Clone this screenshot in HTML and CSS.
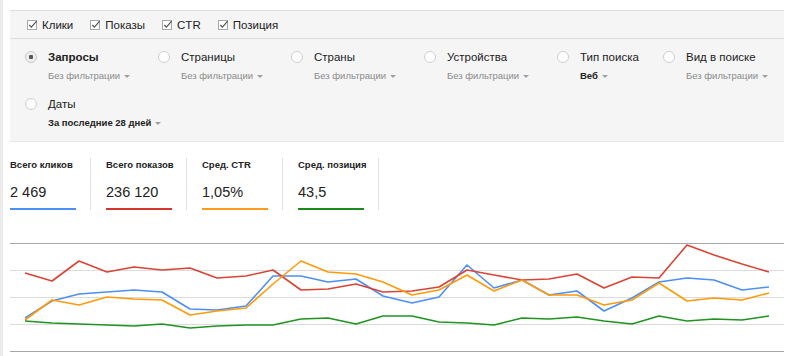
FILE: index.html
```html
<!DOCTYPE html>
<html lang="ru">
<head>
  <meta charset="UTF-8" />
  <meta name="viewport" content="width=device-width, initial-scale=1.0" />
  <title>Анализ поисковых запросов</title>
  <link rel="stylesheet" href="styles.css">
</head>
<body>
  <div class="panel">
    <div class="metrics-toggle">
      <label class="check"><svg class="check-box" width="11" height="11" viewBox="0 0 11 11"><rect x="0.5" y="1.5" width="9" height="9" fill="#fff" stroke="#a8a8a8"/><polyline points="2.3,6 4.4,8.2 9.6,2.2" fill="none" stroke="#555" stroke-width="1.2"/></svg>Клики</label>
      <label class="check"><svg class="check-box" width="11" height="11" viewBox="0 0 11 11"><rect x="0.5" y="1.5" width="9" height="9" fill="#fff" stroke="#a8a8a8"/><polyline points="2.3,6 4.4,8.2 9.6,2.2" fill="none" stroke="#555" stroke-width="1.2"/></svg>Показы</label>
      <label class="check"><svg class="check-box" width="11" height="11" viewBox="0 0 11 11"><rect x="0.5" y="1.5" width="9" height="9" fill="#fff" stroke="#a8a8a8"/><polyline points="2.3,6 4.4,8.2 9.6,2.2" fill="none" stroke="#555" stroke-width="1.2"/></svg>CTR</label>
      <label class="check"><svg class="check-box" width="11" height="11" viewBox="0 0 11 11"><rect x="0.5" y="1.5" width="9" height="9" fill="#fff" stroke="#a8a8a8"/><polyline points="2.3,6 4.4,8.2 9.6,2.2" fill="none" stroke="#555" stroke-width="1.2"/></svg>Позиция</label>
    </div>

    <div class="filters">
      <div class="filter">
        <span class="radio radio-on"></span>
        <div class="filter-body">
          <div class="filter-name filter-name-on">Запросы</div>
          <div class="filter-value">Без фильтрации<span class="caret"></span></div>
        </div>
      </div>
      <div class="filter">
        <span class="radio"></span>
        <div class="filter-body">
          <div class="filter-name">Страницы</div>
          <div class="filter-value">Без фильтрации<span class="caret"></span></div>
        </div>
      </div>
      <div class="filter">
        <span class="radio"></span>
        <div class="filter-body">
          <div class="filter-name">Страны</div>
          <div class="filter-value">Без фильтрации<span class="caret"></span></div>
        </div>
      </div>
      <div class="filter">
        <span class="radio"></span>
        <div class="filter-body">
          <div class="filter-name">Устройства</div>
          <div class="filter-value">Без фильтрации<span class="caret"></span></div>
        </div>
      </div>
      <div class="filter filter-narrow">
        <span class="radio"></span>
        <div class="filter-body">
          <div class="filter-name">Тип поиска</div>
          <div class="filter-value filter-value-set">Веб<span class="caret"></span></div>
        </div>
      </div>
      <div class="filter filter-auto">
        <span class="radio"></span>
        <div class="filter-body">
          <div class="filter-name">Вид в поиске</div>
          <div class="filter-value">Без фильтрации<span class="caret"></span></div>
        </div>
      </div>
      <div class="filter">
        <span class="radio"></span>
        <div class="filter-body">
          <div class="filter-name">Даты</div>
          <div class="filter-value filter-value-set">За последние 28 дней<span class="caret"></span></div>
        </div>
      </div>
    </div>
  </div>

  <div class="totals">
    <div class="total">
      <div class="total-label">Всего кликов</div>
      <div class="total-value">2 469</div>
      <div class="total-line line-clicks"></div>
    </div>
    <div class="total">
      <div class="total-label">Всего показов</div>
      <div class="total-value">236 120</div>
      <div class="total-line line-views"></div>
    </div>
    <div class="total">
      <div class="total-label">Сред. CTR</div>
      <div class="total-value">1,05%</div>
      <div class="total-line line-ctr"></div>
    </div>
    <div class="total">
      <div class="total-label">Сред. позиция</div>
      <div class="total-value">43,5</div>
      <div class="total-line line-pos"></div>
    </div>
  </div>

  <svg class="chart" width="774" height="116" viewBox="10 240 774 116">
    <line class="grid grid-edge" x1="10" y1="244.5" x2="784" y2="244.5"/>
    <line class="grid" x1="10" y1="271.5" x2="784" y2="271.5"/>
    <line class="grid" x1="10" y1="298.5" x2="784" y2="298.5"/>
    <line class="grid" x1="10" y1="325.5" x2="784" y2="325.5"/>
    <line class="grid grid-edge" x1="10" y1="352.5" x2="784" y2="352.5"/>
    <polyline class="series s-clicks" points="25,319 52,302 79,295 107,293 134,291 162,293 190,310 217,311 246,307 273,277 301,277 328,283 356,280 383,297 412,304 439,298 467,266 494,289 522,281 549,296 577,292 604,312 632,299 659,283 687,279 714,281 742,291 769,288"/>
    <polyline class="series s-views" points="25,274 52,282 79,262 107,273 134,268 162,271 190,269 217,279 246,277 273,271 301,291 328,290 356,285 383,293 412,292 439,288 467,271 494,276 522,281 549,280 577,275 604,289 632,278 659,279 687,246 714,256 742,265 769,273"/>
    <polyline class="series s-ctr" points="25,321 52,301 79,306 107,298 134,300 162,301 190,316 217,312 246,309 273,285 301,262 328,273 356,275 383,283 412,296 439,291 467,276 494,292 522,281 549,296 577,296 604,306 632,301 659,284 687,302 714,299 742,301 769,294"/>
    <polyline class="series s-pos" points="25,322 52,324 79,325 107,326 134,327 162,325 190,329 217,327 246,326 273,326 301,320 328,319 356,325 383,317 412,317 439,323 467,324 494,326 522,319 549,320 577,318 604,322 632,325 659,317 687,322 714,320 742,321 769,317"/>
  </svg>
</body>
</html>
```

FILE: styles.css
```css
* { box-sizing: border-box; }
html { background: #fff; }
body { margin: 0; padding: 10px 16px 0 7px; min-height: 356px; border-left: 3px solid #ebebeb; font-family: "Liberation Sans", Arial, sans-serif; color: #222; overflow: hidden; }

.panel { background: #f5f5f5; border-top: 1px solid #dcdcdc; border-bottom: 1px solid #e6e6e6; }
.metrics-toggle { display: flex; align-items: center; gap: 17px; height: 28px; padding-left: 17px; border-bottom: 1px solid #dcdcdc; font-size: 11.5px; }
.check { display: flex; align-items: center; gap: 4px; }
.check-box { display: block; margin-top: -1px; }

.filters { display: flex; flex-wrap: wrap; row-gap: 11px; padding: 9px 0 10px 15px; }
.filter { display: flex; width: 133px; }
.filter-narrow { width: 106px; }
.filter-auto { width: auto; }
.radio { flex: none; width: 12px; height: 12px; margin: 3px 11px 0 0; border: 1px solid #cfcfcf; border-radius: 50%; background: #fff; }
.radio-on { background: #eee radial-gradient(circle, #555 0 2px, transparent 2.5px); border-color: #c8c8c8; }
.filter-name { font-size: 11.5px; line-height: 18px; }
.filter-name-on { font-weight: bold; }
.filter-value { margin-top: 2px; font-size: 9.5px; line-height: 16px; color: #8a8a8a; white-space: nowrap; }
.filter-value-set { color: #222; font-weight: bold; }
.caret { display: inline-block; margin-left: 4px; vertical-align: middle; border-left: 3px solid transparent; border-right: 3px solid transparent; border-top: 3px solid #a0a0a0; }

.totals { display: flex; margin-top: 16px; }
.total { width: 96px; padding: 0 15px; border-right: 1px solid #e0e0e0; }
.total:first-child { width: 81px; padding-left: 0; }
.total-label { font-size: 9.5px; font-weight: bold; line-height: 14px; white-space: nowrap; }
.total-value { margin-top: 10px; font-size: 14.5px; line-height: 20px; }
.total-line { width: 66px; height: 2px; margin-top: 6px; }
.line-clicks { background: #4d8ff5; }
.line-views { background: #d3362b; }
.line-ctr { background: #fb9a1b; }
.line-pos { background: #1a8a1a; }

.chart { display: block; margin-top: 29px; }
.grid { stroke: #dcdcdc; stroke-width: 1; }
.grid-edge { stroke: #a6a6a6; }
.series { fill: none; stroke-width: 1.6; stroke-linejoin: round; }
.s-clicks { stroke: #4d8ff5; }
.s-views { stroke: #da4435; }
.s-ctr { stroke: #ff9a0a; }
.s-pos { stroke: #1f951f; }
```
